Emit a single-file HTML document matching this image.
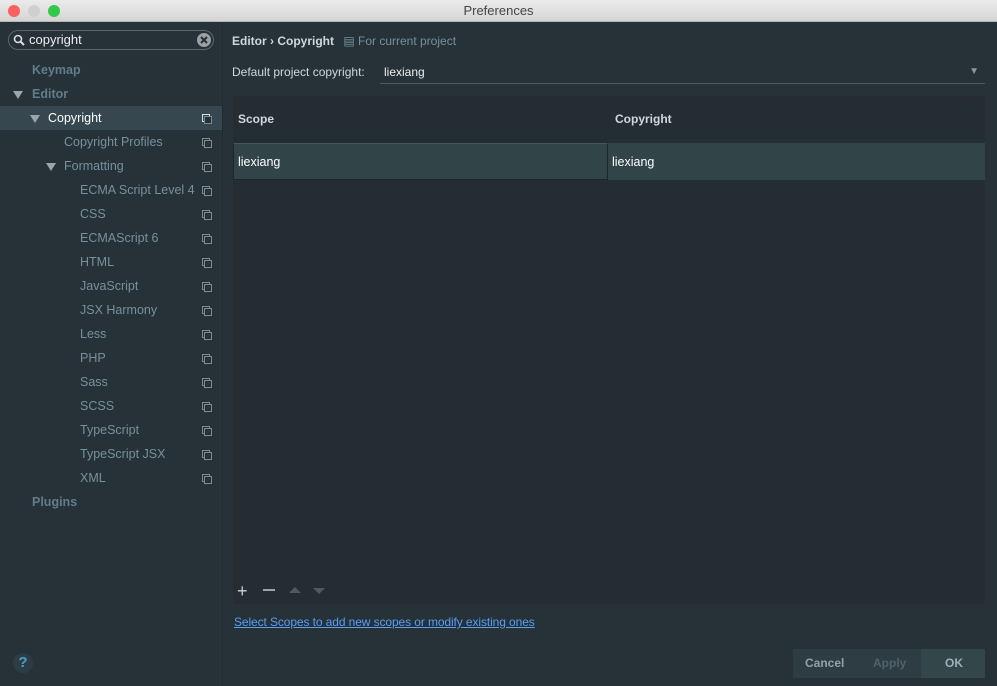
<!DOCTYPE html><html><head><style>
*{margin:0;padding:0;box-sizing:border-box}
body{width:997px;height:686px;background:#263238;font-family:"Liberation Sans",sans-serif;font-size:12px;position:relative;overflow:hidden;color:#b0bec5}
.a{position:absolute}
.tb{left:0;top:0;width:997px;height:22px;background:linear-gradient(#ebebeb,#d5d5d5);border-bottom:1px solid #b5b5b5;text-align:center;color:#444;font-size:13px;line-height:22px}
.dot{top:5px;width:12px;height:12px;border-radius:50%}
.it{left:0;width:222px;height:24px;line-height:24px;color:#78909c;font-size:12.5px}
.ic{position:absolute;left:202px;top:8px;width:8px;height:8px;border:1px solid #7a8a92}
.ic:after{content:"";position:absolute;left:1px;top:1px;width:6px;height:6px;border:1px solid #7a8a92;background:#263238}
.tri{position:absolute;top:9px;width:0;height:0;border-left:5px solid transparent;border-right:5px solid transparent;border-top:8px solid #9aa5ab}
</style></head><body>
<div class="a tb">Preferences</div>
<div class="a dot" style="left:8px;background:#fc605c"></div>
<div class="a dot" style="left:28px;background:#cfcfcf"></div>
<div class="a dot" style="left:48px;background:#34c84a"></div>
<div class="a" style="left:8px;top:30px;width:206px;height:20px;border:1px solid #5a666c;border-radius:10px;color:#eceff1;font-size:13px;line-height:18px;padding-left:20px">copyright
<svg style="position:absolute;left:4px;top:3px" width="12" height="12"><circle cx="5" cy="5" r="3.5" stroke="#ddd" stroke-width="1.6" fill="none"/><line x1="7.5" y1="7.5" x2="11" y2="11" stroke="#ddd" stroke-width="2"/></svg>
<svg style="position:absolute;right:2px;top:2px" width="14" height="14"><circle cx="7" cy="7" r="7" fill="#9a9fa2"/><path d="M4 4L10 10M10 4L4 10" stroke="#263238" stroke-width="2"/></svg></div>
<div class="a it" style="top:58px;padding-left:32px;color:#607d8b;font-weight:bold">Keymap</div>
<div class="a it" style="top:82px;padding-left:32px;color:#607d8b;font-weight:bold"><span class="tri" style="left:13px"></span>Editor</div>
<div class="a it" style="top:106px;padding-left:48px;background:#37474f;color:#fff"><span class="tri" style="left:30px"></span>Copyright<span class="ic" style="border-color:#ddd"></span></div>
<div class="a it" style="top:130px;padding-left:64px">Copyright Profiles<span class="ic"></span></div>
<div class="a it" style="top:154px;padding-left:64px"><span class="tri" style="left:46px"></span>Formatting<span class="ic"></span></div>
<div class="a it" style="top:178px;padding-left:80px">ECMA Script Level 4<span class="ic"></span></div>
<div class="a it" style="top:202px;padding-left:80px">CSS<span class="ic"></span></div>
<div class="a it" style="top:226px;padding-left:80px">ECMAScript 6<span class="ic"></span></div>
<div class="a it" style="top:250px;padding-left:80px">HTML<span class="ic"></span></div>
<div class="a it" style="top:274px;padding-left:80px">JavaScript<span class="ic"></span></div>
<div class="a it" style="top:298px;padding-left:80px">JSX Harmony<span class="ic"></span></div>
<div class="a it" style="top:322px;padding-left:80px">Less<span class="ic"></span></div>
<div class="a it" style="top:346px;padding-left:80px">PHP<span class="ic"></span></div>
<div class="a it" style="top:370px;padding-left:80px">Sass<span class="ic"></span></div>
<div class="a it" style="top:394px;padding-left:80px">SCSS<span class="ic"></span></div>
<div class="a it" style="top:418px;padding-left:80px">TypeScript<span class="ic"></span></div>
<div class="a it" style="top:442px;padding-left:80px">TypeScript JSX<span class="ic"></span></div>
<div class="a it" style="top:466px;padding-left:80px">XML<span class="ic"></span></div>
<div class="a it" style="top:490px;padding-left:32px;color:#607d8b;font-weight:bold">Plugins</div>
<div class="a" style="left:222px;top:23px;width:1px;height:663px;background:#222b30"></div>
<div class="a" style="left:232px;top:34px;color:#cfd8dc;font-weight:bold">Editor › Copyright <span style="font-weight:normal;color:#78909c;margin-left:6px">▤ For current project</span></div>
<div class="a" style="left:232px;top:65px;color:#cfd8dc">Default project copyright:</div>
<div class="a" style="left:380px;top:60px;width:605px;height:24px;border-bottom:1px solid #4a5a62;color:#eceff1;line-height:24px;padding-left:4px">liexiang<span style="position:absolute;right:6px;top:0;color:#8a969c;font-size:10px">▼</span></div>
<div class="a" style="left:233px;top:96px;width:752px;height:508px;background:#242d32;border:1px solid #2d2a30"></div>
<div class="a" style="left:238px;top:112px;color:#cfd8dc;font-weight:bold">Scope</div>
<div class="a" style="left:615px;top:112px;color:#cfd8dc;font-weight:bold">Copyright</div>
<div class="a" style="left:233px;top:143px;width:752px;height:37px;background:#314549"></div>
<div class="a" style="left:233px;top:143px;width:375px;height:37px;border:1px solid #1e2629;border-top-color:#44575b;color:#fff;line-height:36px;padding-left:4px;font-size:12.5px">liexiang</div>
<div class="a" style="left:612px;top:155px;color:#fff;font-size:12.5px">liexiang</div>
<div class="a" style="left:237px;top:581px;color:#c8d0d4;font-size:18px">+</div>
<div class="a" style="left:263px;top:589px;width:12px;height:2px;background:#9aa5ab"></div>
<div class="a" style="left:289px;top:587px;border-left:6px solid transparent;border-right:6px solid transparent;border-bottom:6px solid #4e5a60"></div>
<div class="a" style="left:313px;top:588px;border-left:6px solid transparent;border-right:6px solid transparent;border-top:6px solid #4e5a60"></div>
<div class="a" style="left:234px;top:615px;color:#589df6;text-decoration:underline;font-size:12px;letter-spacing:-0.1px">Select Scopes to add new scopes or modify existing ones</div>
<div class="a" style="left:13px;top:653px;width:20px;height:20px;border-radius:50%;background:#2c3d45;color:#4f9cc9;font-weight:bold;font-size:15px;text-align:center;line-height:20px">?</div>
<div class="a" style="left:793px;top:649px;width:192px;height:29px;background:#2e3c43"></div>
<div class="a" style="left:921px;top:649px;width:64px;height:29px;background:#33474b"></div>
<div class="a" style="left:805px;top:656px;color:#8fa1ab;font-weight:bold">Cancel</div>
<div class="a" style="left:873px;top:656px;color:#4e626c;font-weight:bold">Apply</div>
<div class="a" style="left:945px;top:656px;color:#9fb0b8;font-weight:bold">OK</div>
</body></html>
